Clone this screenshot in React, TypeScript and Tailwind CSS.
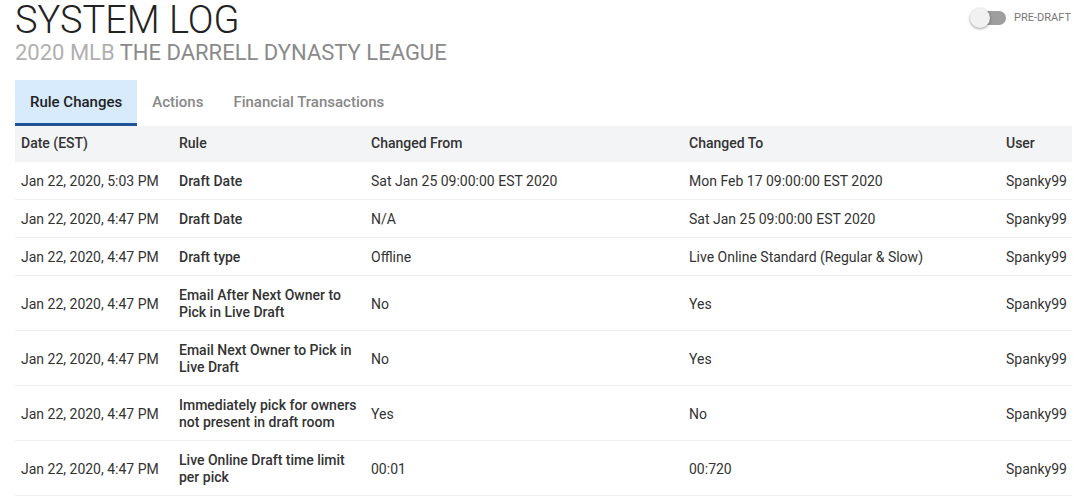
import React from 'react';

type LogRow = {
  date: string;
  rule: string;
  from: string;
  to: string;
  user: string;
};

const rows: LogRow[] = [
  { date: 'Jan 22, 2020, 5:03 PM', rule: 'Draft Date', from: 'Sat Jan 25 09:00:00 EST 2020', to: 'Mon Feb 17 09:00:00 EST 2020', user: 'Spanky99' },
  { date: 'Jan 22, 2020, 4:47 PM', rule: 'Draft Date', from: 'N/A', to: 'Sat Jan 25 09:00:00 EST 2020', user: 'Spanky99' },
  { date: 'Jan 22, 2020, 4:47 PM', rule: 'Draft type', from: 'Offline', to: 'Live Online Standard (Regular & Slow)', user: 'Spanky99' },
  { date: 'Jan 22, 2020, 4:47 PM', rule: 'Email After Next Owner to Pick in Live Draft', from: 'No', to: 'Yes', user: 'Spanky99' },
  { date: 'Jan 22, 2020, 4:47 PM', rule: 'Email Next Owner to Pick in Live Draft', from: 'No', to: 'Yes', user: 'Spanky99' },
  { date: 'Jan 22, 2020, 4:47 PM', rule: 'Immediately pick for owners not present in draft room', from: 'Yes', to: 'No', user: 'Spanky99' },
  { date: 'Jan 22, 2020, 4:47 PM', rule: 'Live Online Draft time limit per pick', from: '00:01', to: '00:720', user: 'Spanky99' },
];

export default function App() {
  return (
    <main className="min-h-screen bg-white px-[15px] text-[#333] font-['Roboto',sans-serif]">
      <header className="flex items-start justify-between">
        <div>
          <h1 className="text-[38px] font-light leading-[40px] text-[#222]">SYSTEM LOG</h1>
          <p className="text-[22px] leading-[26px] text-[#8a8a8a]">
            <span className="text-[#b0b0b0]">2020 MLB</span> THE DARRELL DYNASTY LEAGUE
          </p>
        </div>
        <div className="mr-[1px] mt-[10px] flex items-center gap-[8px]">
          <div className="relative h-[14px] w-[34px] rounded-full bg-[#9e9e9e]">
            <div className="absolute left-[-2px] top-[-3px] h-[20px] w-[20px] rounded-full bg-[#f1f1f1] shadow-[0_1px_3px_rgba(0,0,0,0.4)]" />
          </div>
          <span className="text-[11px] text-[#777]">PRE-DRAFT</span>
        </div>
      </header>

      <nav className="mt-[14px] flex text-[15px] font-medium leading-[18px]">
        <div className="border-b-[3px] border-[#1f5597] bg-[#d7ebfc] px-[15px] pb-[12px] pt-[13px] text-[#222]">Rule Changes</div>
        <div className="px-[15px] pt-[13px] text-[#888]">Actions</div>
        <div className="px-[15px] pt-[13px] text-[#888]">Financial Transactions</div>
      </nav>

      <table className="w-full table-fixed border-collapse text-[14px] leading-[17px]">
        <colgroup>
          <col className="w-[158px]" />
          <col className="w-[192px]" />
          <col className="w-[318px]" />
          <col className="w-[317px]" />
          <col />
        </colgroup>
        <thead>
          <tr className="h-[36px] bg-[#f3f4f6] text-left">
            <th className="px-[6px] pb-[1px] font-medium text-[#333]">Date (EST)</th>
            <th className="px-[6px] pb-[1px] font-medium text-[#333]">Rule</th>
            <th className="px-[6px] pb-[1px] font-medium text-[#333]">Changed From</th>
            <th className="px-[6px] pb-[1px] font-medium text-[#333]">Changed To</th>
            <th className="px-[6px] pb-[1px] font-medium text-[#333]">User</th>
          </tr>
        </thead>
        <tbody>
          {rows.map((row, i) => (
            <tr key={i} className="border-b border-[#eeeeee]">
              <td className="px-[6px] pb-[9px] pt-[11px]">{row.date}</td>
              <td className="pb-[9px] pl-[6px] pr-[2px] pt-[11px] font-medium text-[#333]">{row.rule}</td>
              <td className="px-[6px] pb-[9px] pt-[11px]">{row.from}</td>
              <td className="px-[6px] pb-[9px] pt-[11px]">{row.to}</td>
              <td className="px-[6px] pb-[9px] pt-[11px] whitespace-nowrap">{row.user}</td>
            </tr>
          ))}
        </tbody>
      </table>
    </main>
  );
}
